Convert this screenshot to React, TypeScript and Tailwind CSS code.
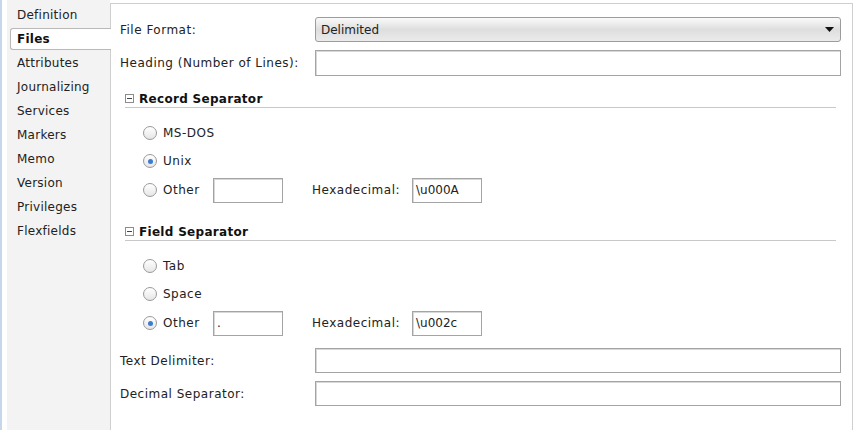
import React from 'react';

const navItems = [
  'Definition',
  'Files',
  'Attributes',
  'Journalizing',
  'Services',
  'Markers',
  'Memo',
  'Version',
  'Privileges',
  'Flexfields',
];

const Radio: React.FC<{ checked?: boolean; label: string }> = ({ checked, label }) => (
  <div className="flex items-center">
    <span className="flex h-[14px] w-[14px] items-center justify-center rounded-full border border-[#9a9a9a] bg-gradient-to-b from-[#ffffff] to-[#e6e6e6]">
      {checked && <span className="h-[5px] w-[5px] rounded-full bg-[#3d7bd0]" />}
    </span>
    <span className="ml-[6px]">{label}</span>
  </div>
);

const TextBox: React.FC<{ className?: string; value?: string }> = ({ className = '', value }) => (
  <div
    className={`flex h-[25px] items-center border border-[#a4a4a4] bg-white pl-[3px] tracking-normal shadow-[inset_1px_1px_0_#d8d8d8] ${className}`}
  >
    {value}
  </div>
);

const SectionHeader: React.FC<{ title: string; className?: string }> = ({ title, className = '' }) => (
  <div className={`ml-[5px] mr-[5px] flex h-[18px] items-center border-b border-[#c8c8c8] ${className}`}>
    <span className="flex h-[9px] w-[9px] items-center justify-center border border-[#8c8c8c] bg-white">
      <span className="h-px w-[5px] bg-[#444]" />
    </span>
    <span className="ml-[5px] font-bold tracking-[0.3px] text-[#111]">{title}</span>
  </div>
);

const SeparatorOptions: React.FC<{
  first: string;
  second: string;
  checked: number;
  other: string;
  hex: string;
}> = ({ first, second, checked, other, hex }) => (
  <div className="mt-[11px] pl-[23px]">
    <div className="flex h-[28px] items-center">
      <Radio label={first} checked={checked === 0} />
    </div>
    <div className="flex h-[28px] items-center">
      <Radio label={second} checked={checked === 1} />
    </div>
    <div className="flex h-[30px] items-center">
      <div className="w-[70px]">
        <Radio label="Other" checked={checked === 2} />
      </div>
      <TextBox className="w-[70px]" value={other} />
      <span className="ml-[29px] w-[100px]">Hexadecimal:</span>
      <TextBox className="w-[70px]" value={hex} />
    </div>
  </div>
);

export default function App() {
  return (
    <div className="flex h-[430px] w-[857px] overflow-hidden bg-white font-['DejaVu_Sans',sans-serif] text-[12px] text-[#222]">
      <div className="w-[2px] bg-[#c6d7ea]" />
      <div className="w-[5px] bg-white" />
      <div className="relative z-10 flex w-[103px] flex-col bg-[#f3f3f3] pt-[3px] tracking-[0.25px]">
        {navItems.map((item) =>
          item === 'Files' ? (
            <div key={item} className="flex h-[24px] items-center">
              <div className="ml-[3px] mr-[-1px] flex h-[22px] flex-1 items-center rounded-l-[3px] border border-r-0 border-[#b9b9b9] bg-white pl-[6px] font-bold text-[#111]">
                {item}
              </div>
            </div>
          ) : (
            <div key={item} className="flex h-[24px] items-center pl-[10px]">
              {item}
            </div>
          )
        )}
      </div>
      <div className="flex flex-1 flex-col pt-[3px] pr-[4px]">
        <div className="flex-1 border-l border-r border-t border-[#cfcfcf] pl-[9px] pr-[11px] pt-[13px] tracking-[0.5px]">
          <div className="flex h-[25px] items-center">
            <span className="w-[195px]">File Format:</span>
            <div className="flex h-[25px] flex-1 items-center justify-between rounded-[3px] border border-[#9c9c9c] bg-gradient-to-b from-[#fafafa] via-[#dedede] to-[#ebebeb] pl-[5px] pr-[6px] tracking-normal">
              <span>Delimited</span>
              <svg width="9" height="5" viewBox="0 0 9 5">
                <path d="M0 0 H9 L4.5 5 Z" fill="#111" />
              </svg>
            </div>
          </div>
          <div className="mt-[8px] flex h-[26px] items-center">
            <span className="w-[195px]">Heading (Number of Lines):</span>
            <TextBox className="h-[26px] flex-1" />
          </div>

          <SectionHeader title="Record Separator" className="mt-[14px]" />
          <SeparatorOptions first="MS-DOS" second="Unix" checked={1} other="" hex="\u000A" />

          <SectionHeader title="Field Separator" className="mt-[18px]" />
          <SeparatorOptions first="Tab" second="Space" checked={2} other="." hex="\u002c" />

          <div className="mt-[10px] flex h-[25px] items-center">
            <span className="w-[195px]">Text Delimiter:</span>
            <TextBox className="flex-1" />
          </div>
          <div className="mt-[8px] flex h-[25px] items-center">
            <span className="w-[195px]">Decimal Separator:</span>
            <TextBox className="flex-1" />
          </div>
        </div>
      </div>
    </div>
  );
}
